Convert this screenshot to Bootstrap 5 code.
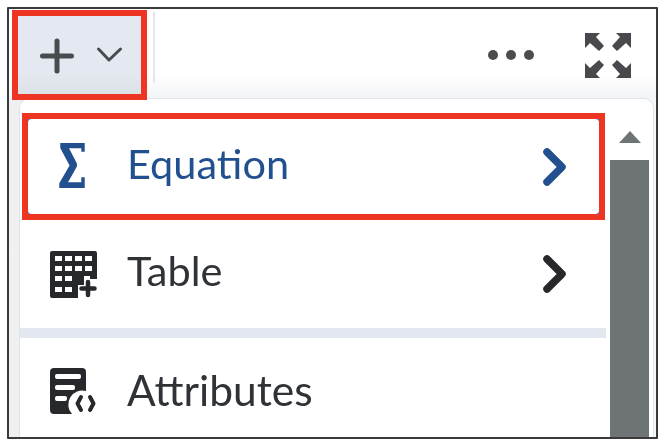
<!doctype html>
<html lang="en">
<head>
<meta charset="utf-8">
<title>Editor insert menu</title>
<link href="https://cdn.jsdelivr.net/npm/bootstrap@5.3.0/dist/css/bootstrap.min.css" rel="stylesheet">
<style>
html,body{margin:0;background:#fff;height:100%;overflow:hidden}
body{padding:7px 0 0 7px;font-family:"Lato","Liberation Sans",sans-serif}
.shot{width:651px;height:432px;border:2px solid #3a3a3a;border-radius:1px;overflow:hidden;background:#fff;filter:blur(.55px)}
.tbar{height:89px;flex:none;background:linear-gradient(#fff 72%,#f3f4f5 100%);position:relative;z-index:2}
.addbtn{width:135px;height:90px;margin:1px 0 -2px 3px;border:6px solid #ee3524;background:linear-gradient(#e4e8f0 70%,#dde1e8 100%);padding:0;box-sizing:border-box;border-radius:0}
.sep{width:2px;height:71px;background:#e3e6ea;margin-left:6px;margin-top:3px}
.tright{margin-left:auto}
.dots{margin-right:49px;margin-top:21px}
.expand{margin-right:24px;margin-top:23px}
.lower{min-height:0;background:linear-gradient(90deg,#eef0f2,#f6f7f8)}
.popup{margin-left:10px;flex:1;min-width:0;background:#fff;border:1px solid #dfe3ea;border-bottom:0;border-radius:10px 10px 0 0;margin-right:2px;padding-top:14px;min-height:0}
.items{flex:1;min-width:0}
.eqbox{height:107px;margin:0 5px 0 2px;border:6px solid #ee3524;background:#3f7fc8;flex:none}
.eqin{background:#fff;border-radius:4px;color:#1f4a8f;height:100%}
.mrow{font-size:41.500px;line-height:1;padding-left:30px;padding-right:43px;color:#2f3236}
.eqin.mrow{color:#22508f;padding-left:30px;padding-right:32px}
.rowtab{height:108px;flex:none}
.rowattr{height:106px;flex:none;font-size:42.500px}
.rule{height:10px;background:#e3e8f0;flex:none;margin-right:4px}
.lbl{margin-left:30px;position:relative;top:-3px}
.rowattr .lbl{top:-1px}
.eqin .lbl{margin-left:41px}
.chev{margin-left:auto}
.sbar{width:43px;flex:none;padding-top:18px}
.strack{width:39px;background:#6e7476;flex:1;margin-top:17px}
.sbar svg{margin-left:9px;display:block}
</style>
</head>
<body>
<div class="shot d-flex flex-column">
  <div class="tbar d-flex align-items-start">
    <button class="addbtn d-flex align-items-center" aria-label="Add">
      <svg width="123" height="78" viewBox="0 0 123 78"><path d="M39 25V55M24.500 40H53.500" stroke="#494c4e" stroke-width="5" stroke-linecap="round" fill="none"/><path d="M80.500 33L91 44L102.500 33" stroke="#494c4e" stroke-width="3" stroke-linecap="round" stroke-linejoin="round" fill="none"/></svg>
    </button>
    <div class="sep"></div>
    <div class="tright d-flex align-items-center">
      <svg class="dots" width="48" height="12" viewBox="0 0 48 12"><g fill="#4a4d50"><circle cx="6" cy="6" r="5"/><circle cx="24" cy="6" r="5"/><circle cx="42" cy="6" r="5"/></g></svg>
      <svg class="expand" width="48" height="48" viewBox="0 0 48 48"><g fill="#47494c"><path d="M1 1H16L12 5L20 14L15 19L6 11L1 16Z"/><path d="M47 1H32L36 5L28 14L33 19L42 11L47 16Z"/><path d="M1 46H16L12 42L20 33L15 28L6 36L1 31Z"/><path d="M47 46H32L36 42L28 33L33 28L42 36L47 31Z"/></g></svg>
    </div>
  </div>
  <div class="lower d-flex flex-grow-1">
    <div class="popup d-flex overflow-hidden">
      <div class="items d-flex flex-column">
        <div class="eqbox">
          <div class="eqin mrow d-flex align-items-center">
            <svg width="28" height="47" viewBox="0 0 28 48" style="margin-top:-3px"><path fill="#22508f" d="M2 1H27V10H23.500V6.500H11L19 22V25L10 41H23.500V36H27V47H1V42L11.500 24L2 6Z"/></svg>
            <span class="lbl">Equation</span>
            <svg class="chev" width="24" height="38" viewBox="0 0 24 38"><path d="M4 4L19 19L4 34" fill="none" stroke="#22508f" stroke-width="7.500" stroke-linecap="round" stroke-linejoin="round"/></svg>
          </div>
        </div>
        <div class="rowtab mrow d-flex align-items-center">
          <svg width="47" height="47" viewBox="0 0 47 47"><path fill="#26282b" d="M2 0H45a2 2 0 0 1 2 2V28H40V25H34V34H28V47H2a2 2 0 0 1-2-2V2a2 2 0 0 1 2-2Z"/><g fill="#fff"><rect x="5" y="5" width="7" height="5"/><rect x="15" y="5" width="7" height="5"/><rect x="25" y="5" width="7" height="5"/><rect x="35" y="5" width="7" height="5"/><rect x="5" y="15" width="7" height="5"/><rect x="15" y="15" width="7" height="5"/><rect x="25" y="15" width="7" height="5"/><rect x="35" y="15" width="7" height="5"/><rect x="5" y="25" width="7" height="5"/><rect x="15" y="25" width="7" height="5"/><rect x="5" y="36" width="7" height="5"/><rect x="15" y="36" width="7" height="5"/></g><path d="M38 31V44M31.500 37.500H44.500" stroke="#26282b" stroke-width="4.500" stroke-linecap="round"/></svg>
          <span class="lbl">Table</span>
          <svg class="chev" width="24" height="38" viewBox="0 0 24 38"><path d="M4 4L19 19L4 34" fill="none" stroke="#26282b" stroke-width="7.500" stroke-linecap="round" stroke-linejoin="round"/></svg>
        </div>
        <div class="rule"></div>
        <div class="rowattr mrow d-flex align-items-center">
          <svg width="47" height="47" viewBox="0 0 47 47"><path fill="#26282b" d="M4 0H32a4 4 0 0 1 4 4V23A14 14 0 0 0 22 46H4a4 4 0 0 1-4-4V4a4 4 0 0 1 4-4Z"/><g fill="#fff"><rect x="5" y="6" width="26" height="5" rx="2"/><rect x="5" y="17" width="20" height="5" rx="2"/><rect x="5" y="28" width="12" height="5" rx="2"/></g><path d="M31 29L27.500 35.500L31 42M40 29L43.500 35.500L40 42" fill="none" stroke="#26282b" stroke-width="4" stroke-linecap="round" stroke-linejoin="round"/></svg>
          <span class="lbl">Attributes</span>
        </div>
      </div>
      <div class="sbar d-flex flex-column">
        <svg width="22" height="12" viewBox="0 0 22 12"><path d="M11 0L22 12H0Z" fill="#6e7476"/></svg>
        <div class="strack"></div>
      </div>
    </div>
  </div>
</div>
<script src="https://cdn.jsdelivr.net/npm/bootstrap@5.3.0/dist/js/bootstrap.bundle.min.js"></script>
</body>
</html>
